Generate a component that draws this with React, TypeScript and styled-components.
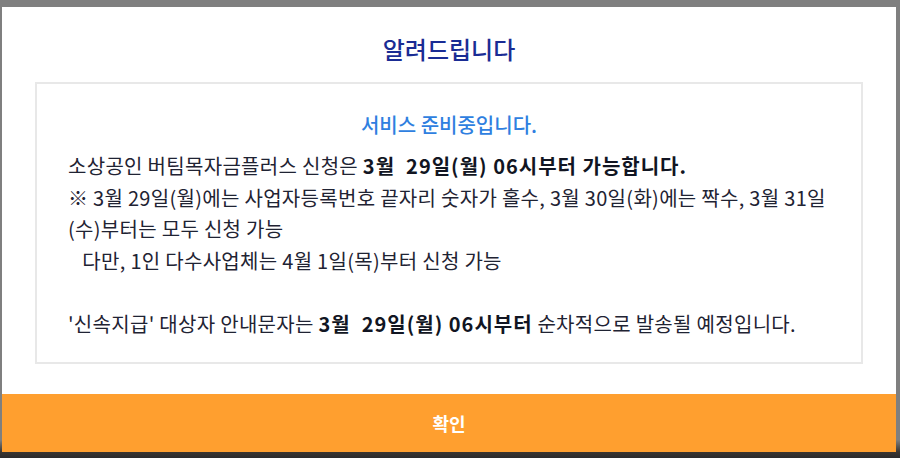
import React from "react";
import styled, { createGlobalStyle } from "styled-components";

const Global = createGlobalStyle`
  html, body {
    margin: 0;
    padding: 0;
    width: 900px;
    height: 458px;
    overflow: hidden;
    background: #7f7f7f;
    font-family: "Noto Sans CJK KR", "Noto Sans", sans-serif;
  }
`;

const Backdrop = styled.div`
  width: 900px;
  height: 458px;
  box-sizing: border-box;
  padding: 7px 4px 6px 2px;
  background: linear-gradient(to bottom, #7f7f7f 0, #7f7f7f 440px, #3a3530 452px, #2b2a2c 458px);
`;

const Modal = styled.div`
  background: #ffffff;
  height: 100%;
  display: flex;
  flex-direction: column;
`;

const Title = styled.h1`
  margin: 0;
  height: 75px;
  box-sizing: border-box;
  padding-top: 27px;
  line-height: 30px;
  text-align: center;
  font-size: 24px;
  font-weight: 500;
  color: #1a2c94;
`;

const Box = styled.div`
  margin: 0 33px;
  border: 2px solid #e8e8e8;
  padding: 26px 31px 23px 31px;
`;

const Sub = styled.p`
  margin: 0 0 10px;
  line-height: 30px;
  text-align: center;
  font-size: 20px;
  font-weight: 500;
  color: #2f7fe0;
`;

const Body = styled.p`
  margin: 0;
  font-size: 20px;
  letter-spacing: 0.3px;
  line-height: 31.5px;
  color: #1f2333;
  white-space: nowrap;
`;

const Strong = styled.b`
  font-weight: 700;
  letter-spacing: 1px;
  color: #111522;
`;

const Button = styled.button`
  margin-top: auto;
  height: 58px;
  border: 0;
  width: 100%;
  background: #ff9f2f;
  color: #ffffff;
  font-family: inherit;
  font-size: 18px;
  font-weight: 700;
  cursor: pointer;
`;

export default function App() {
  return (
    <>
      <Global />
      <Backdrop>
        <Modal>
          <Title>알려드립니다</Title>
          <Box>
            <Sub>서비스 준비중입니다.</Sub>
            <Body>
              소상공인 버팀목자금플러스 신청은 <Strong>3월&nbsp; 29일(월) 06시부터 가능합니다.</Strong>
              <br />
              ※ 3월 29일(월)에는 사업자등록번호 끝자리 숫자가 홀수, 3월 30일(화)에는 짝수, 3월 31일
              <br />
              (수)부터는 모두 신청 가능
              <br />
              &nbsp;&nbsp; 다만, 1인 다수사업체는 4월 1일(목)부터 신청 가능
              <br />
              <br />
              '신속지급' 대상자 안내문자는 <Strong>3월&nbsp; 29일(월) 06시부터</Strong> 순차적으로 발송될 예정입니다.
            </Body>
          </Box>
          <Button>확인</Button>
        </Modal>
      </Backdrop>
    </>
  );
}
